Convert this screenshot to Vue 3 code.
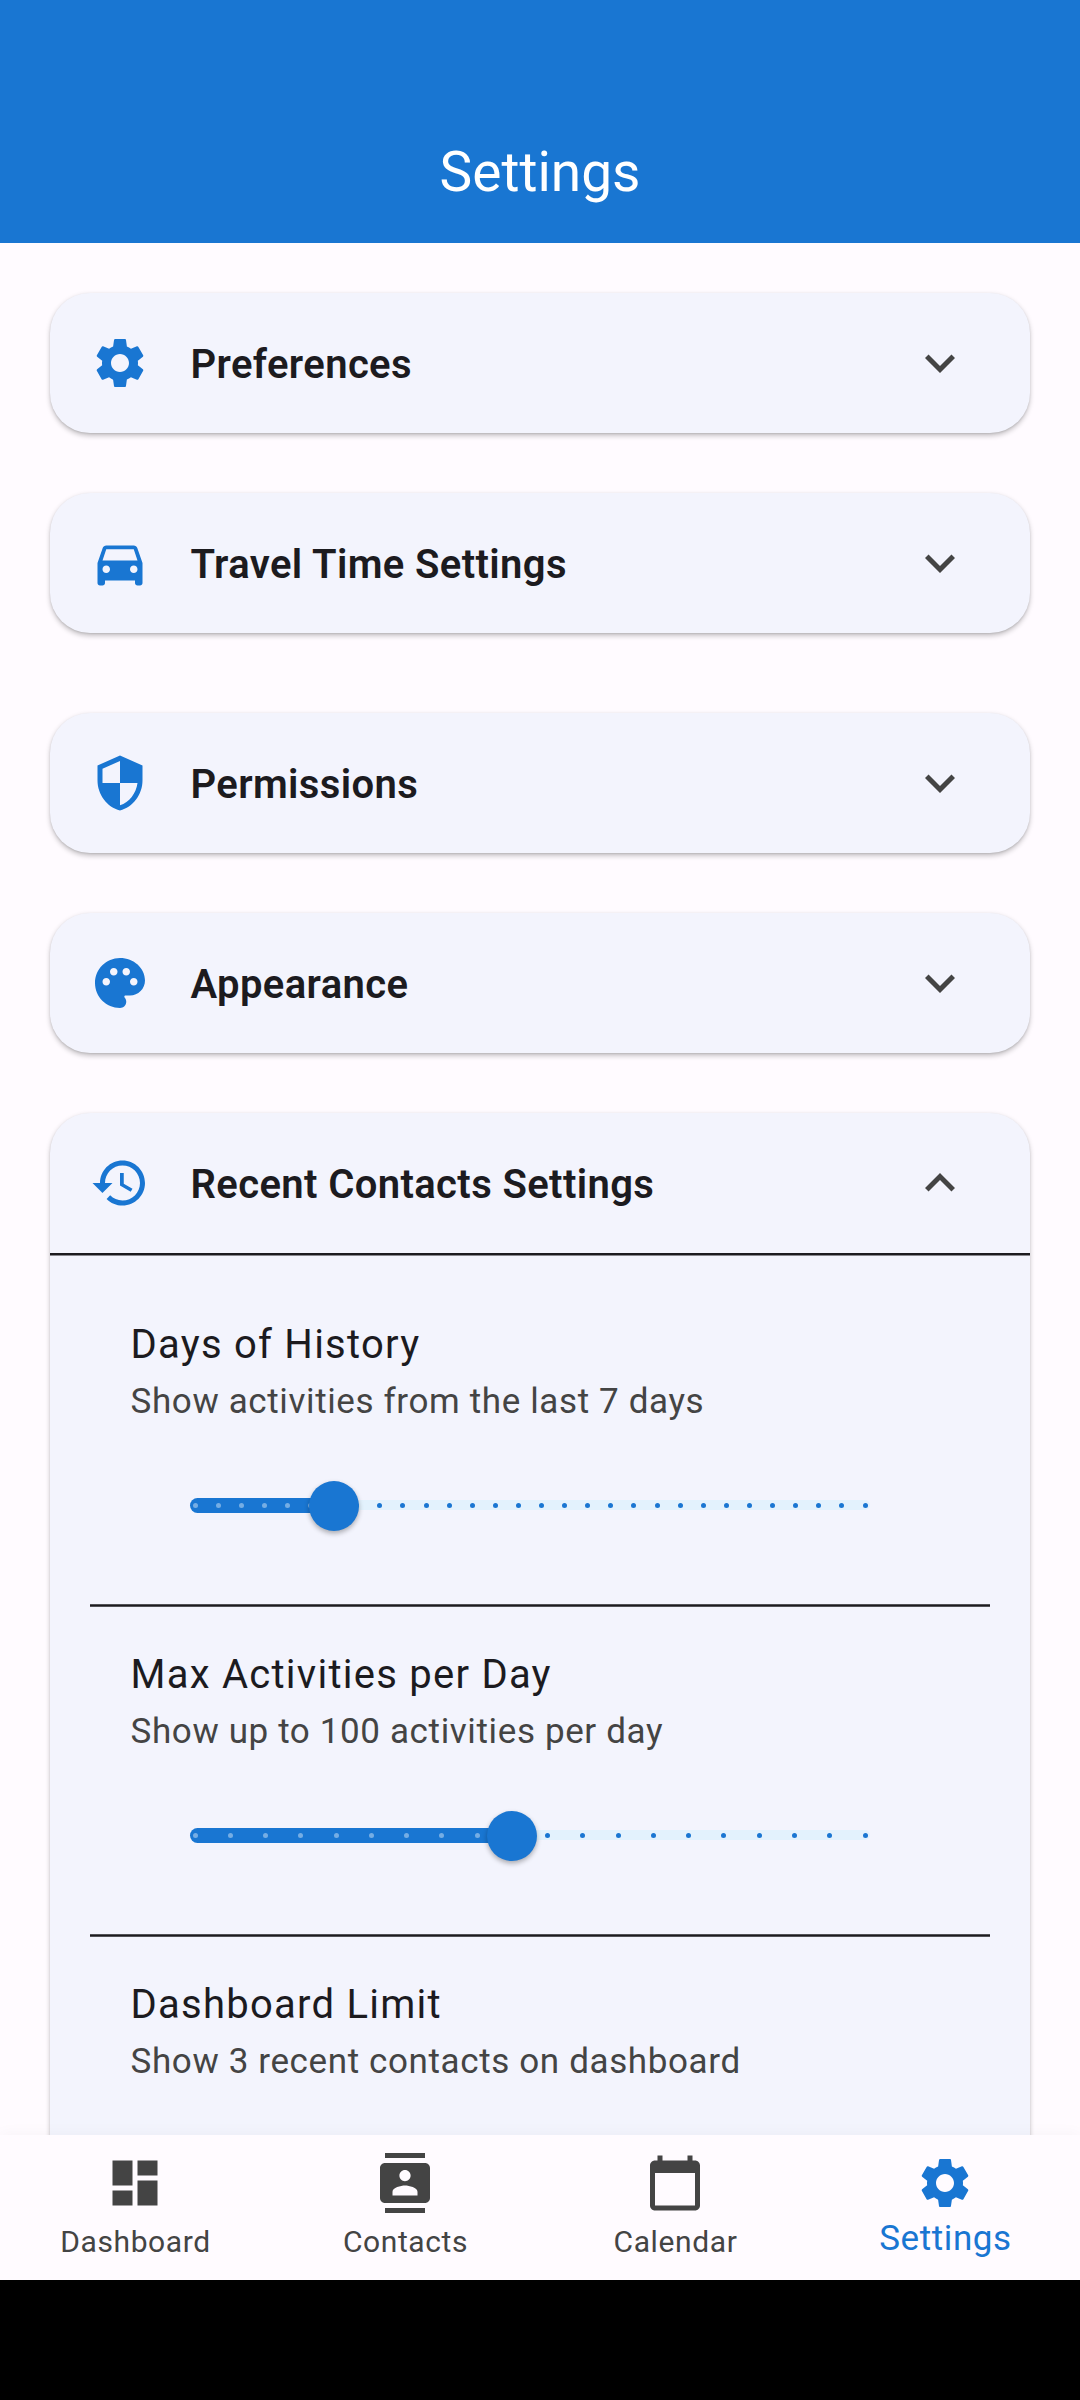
<script setup>
const gear = 'M19.14 12.94c.04-.3.06-.61.06-.94 0-.32-.02-.64-.07-.94l2.03-1.58c.18-.14.23-.41.12-.61l-1.92-3.32c-.12-.22-.37-.29-.59-.22l-2.39.96c-.5-.38-1.03-.7-1.62-.94l-.36-2.54c-.04-.24-.24-.41-.48-.41h-3.84c-.24 0-.43.17-.47.41l-.36 2.54c-.59.24-1.13.57-1.62.94l-2.39-.96c-.22-.08-.47 0-.59.22L2.74 8.87c-.12.21-.08.47.12.61l2.03 1.58c-.05.3-.09.63-.09.94s.02.64.07.94l-2.03 1.58c-.18.14-.23.41-.12.61l1.92 3.32c.12.22.37.29.59.22l2.39-.96c.5.38 1.03.7 1.62.94l.36 2.54c.05.24.24.41.48.41h3.84c.24 0 .44-.17.47-.41l.36-2.54c.59-.24 1.13-.56 1.62-.94l2.39.96c.22.08.47 0 .59-.22l1.92-3.32c.12-.22.07-.47-.12-.61l-2.01-1.58zM12 15.6c-1.98 0-3.6-1.62-3.6-3.6s1.62-3.6 3.6-3.6 3.6 1.62 3.6 3.6-1.62 3.6-3.6 3.6z'
const car = 'M18.92 6.01C18.72 5.42 18.16 5 17.5 5h-11c-.66 0-1.21.42-1.42 1.01L3 12v8c0 .55.45 1 1 1h1c.55 0 1-.45 1-1v-1h12v1c0 .55.45 1 1 1h1c.55 0 1-.45 1-1v-8l-2.08-5.99zM6.5 16c-.83 0-1.5-.67-1.5-1.5S5.67 13 6.5 13s1.5.67 1.5 1.5S7.33 16 6.5 16zm11 0c-.83 0-1.5-.67-1.5-1.5s.67-1.5 1.5-1.5 1.5.67 1.5 1.5-.67 1.5-1.5 1.5zM5 11l1.5-4.5h11L19 11H5z'
const shield = 'M12 1L3 5v6c0 5.55 3.84 10.74 9 12 5.16-1.26 9-6.45 9-12V5l-9-4zm0 10.99h7c-.53 4.12-3.28 7.79-7 8.94V12H5V6.3l7-3.11v8.8z'
const palette = 'M12 2C6.49 2 2 6.49 2 12s4.49 10 10 10c1.38 0 2.5-1.12 2.5-2.5 0-.61-.23-1.2-.64-1.67-.08-.1-.13-.21-.13-.33 0-.28.22-.5.5-.5H16c3.31 0 6-2.69 6-6 0-4.96-4.49-9-10-9zM17.5 13c-.83 0-1.5-.67-1.5-1.5s.67-1.5 1.5-1.5 1.5.67 1.5 1.5-.67 1.5-1.5 1.5zm-3-4c-.83 0-1.5-.67-1.5-1.5S13.67 6 14.5 6s1.5.67 1.5 1.5S15.33 9 14.5 9zM5 11.5c0-.83.67-1.5 1.5-1.5s1.5.67 1.5 1.5S7.33 13 6.5 13 5 12.33 5 11.5zm6-4c0 .83-.67 1.5-1.5 1.5S8 8.33 8 7.5 8.67 6 9.5 6s1.5.67 1.5 1.5z'
const history = 'M13 3c-4.97 0-9 4.03-9 9H1l3.89 3.89.07.14L9 12H6c0-3.87 3.13-7 7-7s7 3.13 7 7-3.13 7-7 7c-1.93 0-3.68-.79-4.94-2.06l-1.42 1.42C8.27 19.99 10.51 21 13 21c4.97 0 9-4.03 9-9s-4.03-9-9-9zm-1 5v5l4.28 2.54.72-1.21-3.5-2.08V8H12z'
const more = 'M16.59 8.59L12 13.17 7.41 8.59 6 10l6 6 6-6z'
const less = 'M12 8l-6 6 1.41 1.41L12 10.83l4.59 4.58L18 14z'

const panels = [
  { title: 'Preferences', icon: gear },
  { title: 'Travel Time Settings', icon: car, wide: true },
  { title: 'Permissions', icon: shield },
  { title: 'Appearance', icon: palette },
]

const ticks = (count, active) =>
  Array.from({ length: count }, (_, i) => ({ at: (i / (count - 1)) * 100, on: i <= active }))

const options = [
  { title: 'Days of History', note: 'Show activities from the last 7 days', at: (6 / 29) * 100, ticks: ticks(30, 6) },
  { title: 'Max Activities per Day', note: 'Show up to 100 activities per day', at: (9 / 19) * 100, ticks: ticks(20, 9) },
  { title: 'Dashboard Limit', note: 'Show 3 recent contacts on dashboard' },
]

const tabs = [
  { label: 'Dashboard', icon: 'M3 13h8V3H3v10zm0 8h8v-6H3v6zm10 0h8V11h-8v10zm0-18v6h8V3h-8z' },
  { label: 'Contacts', icon: 'M20 0H4v2h16V0zM4 24h16v-2H4v2zM20 4H4c-1.1 0-2 .9-2 2v12c0 1.1.9 2 2 2h16c1.1 0 2-.9 2-2V6c0-1.1-.9-2-2-2zm-8 2.75c1.24 0 2.25 1.01 2.25 2.25s-1.01 2.25-2.25 2.25S9.75 10.24 9.75 9 10.76 6.75 12 6.75zM17 17H7v-1.5c0-1.67 3.33-2.5 5-2.5s5 .83 5 2.5V17z' },
  { label: 'Calendar', icon: 'M20 3h-1V1h-2v2H7V1H5v2H4c-1.1 0-2 .9-2 2v16c0 1.1.9 2 2 2h16c1.1 0 2-.9 2-2V5c0-1.1-.9-2-2-2zm0 18H4V8h16v13z' },
  { label: 'Settings', icon: gear, active: true },
]
</script>

<template>
  <div class="screen">
    <header class="app-bar"><h1>Settings</h1></header>

    <main class="list">
      <section v-for="p in panels" :key="p.title" class="card" :class="{ wide: p.wide }">
        <div class="card-head">
          <svg class="icon" viewBox="0 0 24 24"><path :d="p.icon" /></svg>
          <h2>{{ p.title }}</h2>
          <svg class="icon chevron" viewBox="0 0 24 24"><path :d="more" /></svg>
        </div>
      </section>

      <section class="card">
        <div class="card-head">
          <svg class="icon" viewBox="0 0 24 24"><path :d="history" /></svg>
          <h2>Recent Contacts Settings</h2>
          <svg class="icon chevron" viewBox="0 0 24 24"><path :d="less" /></svg>
        </div>
        <svg class="head-rule" viewBox="0 0 980 3"><rect width="980" height="2.5" /></svg>
        <div class="options">
          <div v-for="o in options" :key="o.title" class="option">
            <h3>{{ o.title }}</h3>
            <p>{{ o.note }}</p>
            <template v-if="o.ticks">
              <div class="slider">
                <div class="rail"></div>
                <div class="range">
                  <div class="fill" :style="{ width: `calc(${o.at}% + 5px)` }"></div>
                  <i
                    v-for="t in o.ticks"
                    :key="t.at"
                    class="tick"
                    :class="{ on: t.on }"
                    :style="{ left: t.at + '%' }"
                  ></i>
                  <div class="thumb" :style="{ left: o.at + '%' }"></div>
                </div>
              </div>
              <svg class="rule" viewBox="0 0 900 3"><rect y=".25" width="900" height="2.5" /></svg>
            </template>
          </div>
        </div>
      </section>
    </main>

    <nav class="tabs">
      <div v-for="t in tabs" :key="t.label" class="tab" :class="{ active: t.active }">
        <svg class="icon" viewBox="0 0 24 24"><path :d="t.icon" /></svg>
        <span>{{ t.label }}</span>
      </div>
    </nav>
    <div class="system-bar"></div>
  </div>
</template>

<style>
body {
  margin: 0;
  background: #fffbff;
}
</style>

<style scoped>
.screen {
  width: 1080px;
  height: 2400px;
  display: flex;
  flex-direction: column;
  overflow: hidden;
  background: #fffbff;
  font-family: Roboto, "Liberation Sans", sans-serif;
  color: #1c1b1f;
}
h1, h2, h3, p {
  margin: 0;
  font-weight: 400;
  white-space: nowrap;
}
.app-bar {
  flex: none;
  box-sizing: border-box;
  height: 243px;
  padding-top: 103px;
  background: #1976d2;
  color: #fff;
  text-align: center;
}
h1 {
  font-size: 55px;
  line-height: 138px;
}
.list {
  flex: 1;
  min-height: 0;
  overflow: hidden;
  padding: 49.5px 50px 0;
}
.card {
  margin-bottom: 59.5px;
  border-radius: 40px;
  background: #f3f4fd;
  box-shadow: 0 2.5px 5px rgba(0, 0, 0, 0.22), 0 1px 2px rgba(0, 0, 0, 0.1);
}
.card.wide {
  margin-bottom: 79.5px;
}
.card-head {
  height: 140.5px;
  display: flex;
  align-items: center;
  padding: 0 60px 0 40px;
}
.icon {
  flex: none;
  width: 60px;
  height: 60px;
  fill: #1976d2;
}
.chevron {
  fill: #444;
}
h2 {
  flex: 1;
  margin-left: 40px;
  padding: 5px 0 0 0.5px;
  font-size: 40px;
  font-weight: 600;
  line-height: 60px;
  letter-spacing: 0.375px;
}
.head-rule, .rule {
  display: block;
  height: 3px;
  fill: #1c1b1f;
}
.head-rule {
  width: 980px;
}
.rule {
  width: 900px;
  margin-left: -40px;
}
.options {
  height: 1000px;
  padding: 42.5px 40px 0;
}
.option {
  height: 330px;
  padding-left: 40px;
}
h3 {
  padding: 16.5px 0 0 0.5px;
  font-size: 40px;
  line-height: 60px;
  letter-spacing: 1.25px;
}
p {
  padding: 2px 0 0 0.5px;
  font-size: 35px;
  line-height: 50px;
  letter-spacing: 0.625px;
  color: #444;
}
.slider {
  position: relative;
  display: flex;
  align-items: center;
  width: 680px;
  height: 120px;
  margin: 18px 0 39px 60px;
}
.rail {
  width: 680px;
  height: 10px;
  border-radius: 5px;
  background: #e3f2fd;
}
.range {
  position: absolute;
  inset: 0 5px;
}
.fill {
  position: absolute;
  left: -5px;
  top: 53px;
  height: 15px;
  border-radius: 7.5px;
  background: #1976d2;
}
.tick {
  position: absolute;
  top: 58px;
  width: 5px;
  height: 5px;
  margin-left: -2.5px;
  border-radius: 50%;
  background: #1976d2;
}
.tick.on {
  background: #75ade4;
}
.thumb {
  position: absolute;
  top: 35.5px;
  width: 50px;
  height: 50px;
  margin-left: -25px;
  border-radius: 50%;
  background: #1976d2;
  box-shadow: 0 2.5px 5px rgba(0, 0, 0, 0.3);
}
.tabs {
  position: relative;
  flex: none;
  display: flex;
  height: 145px;
  background: #fffbff;
  box-shadow: 0 -2px 14px rgba(0, 0, 0, 0.03);
}
.tab {
  flex: 1;
  display: flex;
  flex-direction: column;
  align-items: center;
  padding-top: 18px;
  color: #444;
  font-size: 30px;
  letter-spacing: 0.6px;
}
.tab .icon {
  fill: #444;
}
.tab span {
  line-height: 40px;
  margin-top: 9px;
  padding-left: 1px;
}
.tab.active {
  color: #1976d2;
  font-size: 35px;
}
.tab.active .icon {
  fill: #1976d2;
}
.tab.active span {
  margin-top: 6px;
}
.system-bar {
  flex: none;
  height: 120px;
  background: #000;
}
</style>
